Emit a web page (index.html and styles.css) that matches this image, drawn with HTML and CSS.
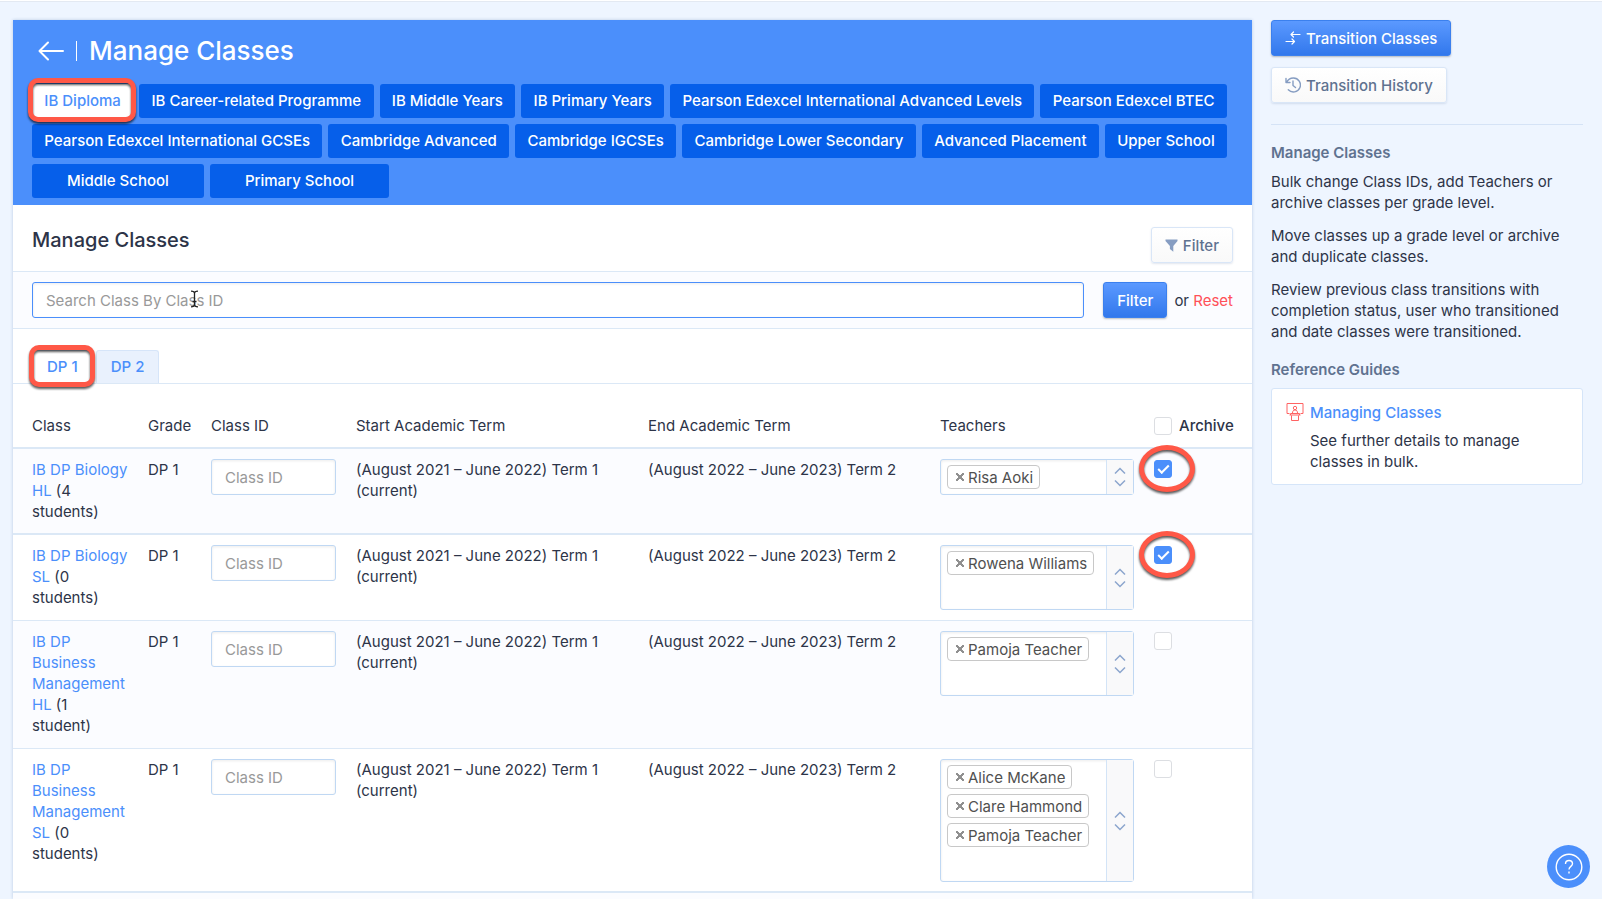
FILE: index.html
```html
<!DOCTYPE html>
<html lang="en">
<head>
  <meta charset="UTF-8">
  <meta name="viewport" content="width=device-width, initial-scale=1.0">
  <title>Manage Classes</title>
  <link rel="stylesheet" href="styles.css">
</head>
<body>
  <div class="layout">
    <main class="panel">
      <header class="panel-header">
        <div class="title-row">
          <a href="#" class="back" aria-label="Back">
            <svg width="26" height="20" viewBox="0 0 26 20" fill="none" stroke="#fff" stroke-width="2" stroke-linecap="round" stroke-linejoin="round"><path d="M10 1.500 1.500 10l8.500 8.500M2 10h23"/></svg>
          </a>
          <h1>Manage Classes</h1>
        </div>
        <nav class="programmes">
          <a href="#" class="programme active marked">IB Diploma</a>
          <a href="#" class="programme">IB Career-related Programme</a>
          <a href="#" class="programme">IB Middle Years</a>
          <a href="#" class="programme">IB Primary Years</a>
          <a href="#" class="programme">Pearson Edexcel International Advanced Levels</a>
          <a href="#" class="programme">Pearson Edexcel BTEC</a>
          <a href="#" class="programme">Pearson Edexcel International GCSEs</a>
          <a href="#" class="programme">Cambridge Advanced</a>
          <a href="#" class="programme">Cambridge IGCSEs</a>
          <a href="#" class="programme">Cambridge Lower Secondary</a>
          <a href="#" class="programme">Advanced Placement</a>
          <a href="#" class="programme">Upper School</a>
          <a href="#" class="programme wide">Middle School</a>
          <a href="#" class="programme wide">Primary School</a>
        </nav>
      </header>

      <div class="section-head">
        <h2>Manage Classes</h2>
        <button type="button" class="btn">
          <svg width="13" height="13" viewBox="0 0 13 13" fill="#869dc2"><path d="M0.500 0.500h12v1.500L8.300 7v5.800L4.900 10V7L0.500 2z"/></svg>
          Filter
        </button>
      </div>

      <form class="search">
        <div class="search-field">
          <input type="text" class="field" placeholder="Search Class By Class ID" aria-label="Search Class By Class ID">
          <svg class="cursor" width="9" height="18" viewBox="0 0 9 18" fill="none" stroke="#222" stroke-width="1.300"><path d="M1 1.200c2 0 3.500.5 3.500 2v11.600c0 1.500-1.500 2-3.500 2M8 1.200c-2 0-3.500.5-3.500 2M8 16.800c-2 0-3.500-.5-3.500-2M2.500 11.500h4"/></svg>
        </div>
        <button type="button" class="btn btn-primary">Filter</button>
        <span class="reset">or <a href="#">Reset</a></span>
      </form>

      <nav class="grades">
        <a href="#" class="grade active marked">DP 1</a>
        <a href="#" class="grade">DP 2</a>
      </nav>

      <table class="classes">
        <colgroup>
          <col class="col-class">
          <col class="col-grade">
          <col class="col-id">
          <col>
          <col>
          <col class="col-teachers">
          <col class="col-archive">
        </colgroup>
        <thead>
          <tr>
            <th>Class</th>
            <th>Grade</th>
            <th>Class ID</th>
            <th>Start Academic Term</th>
            <th>End Academic Term</th>
            <th>Teachers</th>
            <th><label class="archive-all"><input type="checkbox" class="check"> Archive</label></th>
          </tr>
        </thead>
        <tbody>
          <tr class="strong">
            <td><a href="#">IB DP Biology HL</a> (4 students)</td>
            <td>DP 1</td>
            <td><input type="text" class="field" placeholder="Class ID" aria-label="Class ID"></td>
            <td>(August 2021 – June 2022) Term 1 (current)</td>
            <td>(August 2022 – June 2023) Term 2</td>
            <td class="control">
              <div class="teachers">
                <div class="chips">
                  <span class="chip"><button type="button" aria-label="Remove"></button>Risa Aoki</span>
                  <input type="text" aria-label="Add teacher">
                </div>
                <button type="button" class="toggle" aria-label="Open list"><svg width="12" height="20" viewBox="0 0 12 20"><path d="M1 6.500l5-5 5 5M1 13.500l5 5 5-5"/></svg></button>
              </div>
            </td>
            <td><span class="circled"><input type="checkbox" class="check" aria-label="Archive" checked></span></td>
          </tr>
          <tr>
            <td><a href="#">IB DP Biology SL</a> (0 students)</td>
            <td>DP 1</td>
            <td><input type="text" class="field" placeholder="Class ID" aria-label="Class ID"></td>
            <td>(August 2021 – June 2022) Term 1 (current)</td>
            <td>(August 2022 – June 2023) Term 2</td>
            <td class="control">
              <div class="teachers">
                <div class="chips">
                  <span class="chip"><button type="button" aria-label="Remove"></button>Rowena Williams</span>
                  <input type="text" aria-label="Add teacher">
                </div>
                <button type="button" class="toggle" aria-label="Open list"><svg width="12" height="20" viewBox="0 0 12 20"><path d="M1 6.500l5-5 5 5M1 13.500l5 5 5-5"/></svg></button>
              </div>
            </td>
            <td><span class="circled"><input type="checkbox" class="check" aria-label="Archive" checked></span></td>
          </tr>
          <tr>
            <td><a href="#">IB DP Business Management HL</a> (1 student)</td>
            <td>DP 1</td>
            <td><input type="text" class="field" placeholder="Class ID" aria-label="Class ID"></td>
            <td>(August 2021 – June 2022) Term 1 (current)</td>
            <td>(August 2022 – June 2023) Term 2</td>
            <td class="control">
              <div class="teachers">
                <div class="chips">
                  <span class="chip"><button type="button" aria-label="Remove"></button>Pamoja Teacher</span>
                  <input type="text" aria-label="Add teacher">
                </div>
                <button type="button" class="toggle" aria-label="Open list"><svg width="12" height="20" viewBox="0 0 12 20"><path d="M1 6.500l5-5 5 5M1 13.500l5 5 5-5"/></svg></button>
              </div>
            </td>
            <td><input type="checkbox" class="check" aria-label="Archive"></td>
          </tr>
          <tr class="strong">
            <td><a href="#">IB DP Business Management SL</a> (0 students)</td>
            <td>DP 1</td>
            <td><input type="text" class="field" placeholder="Class ID" aria-label="Class ID"></td>
            <td>(August 2021 – June 2022) Term 1 (current)</td>
            <td>(August 2022 – June 2023) Term 2</td>
            <td class="control">
              <div class="teachers">
                <div class="chips">
                  <span class="chip"><button type="button" aria-label="Remove"></button>Alice McKane</span>
                  <span class="chip"><button type="button" aria-label="Remove"></button>Clare Hammond</span>
                  <span class="chip"><button type="button" aria-label="Remove"></button>Pamoja Teacher</span>
                  <input type="text" aria-label="Add teacher">
                </div>
                <button type="button" class="toggle" aria-label="Open list"><svg width="12" height="20" viewBox="0 0 12 20"><path d="M1 6.500l5-5 5 5M1 13.500l5 5 5-5"/></svg></button>
              </div>
            </td>
            <td><input type="checkbox" class="check" aria-label="Archive"></td>
          </tr>
        </tbody>
      </table>
    </main>

    <aside class="sidebar">
      <div class="actions">
        <button type="button" class="btn btn-primary">
          <svg width="16" height="14" viewBox="0 0 16 14" fill="none" stroke="#fff" stroke-width="1.200" stroke-linecap="round" stroke-linejoin="round"><path d="M15 3.500H6M8.500 1 6 3.500 8.500 6M1 10.500h8.500M7 8l2.500 2.500L7 13"/></svg>
          Transition Classes
        </button>
        <button type="button" class="btn">
          <svg width="16" height="16" viewBox="0 0 16 16" fill="none" stroke="#869dc2" stroke-width="1.400" stroke-linecap="round" stroke-linejoin="round"><path d="M1 1.500v4h4M1.500 5.500C3 2.500 5.500 1 8.300 1a7 7 0 1 1-5 11.800M8 4v4.500l2.500 2"/></svg>
          Transition History
        </button>
      </div>
      <h3>Manage Classes</h3>
      <p>Bulk change Class IDs, add Teachers or archive classes per grade level.</p>
      <p>Move classes up a grade level or archive and duplicate classes.</p>
      <p>Review previous class transitions with completion status, user who transitioned and date classes were transitioned.</p>
      <h3 class="guides">Reference Guides</h3>
      <div class="guide">
        <svg width="18" height="20" viewBox="0 0 18 20" fill="none" stroke="#ff6363" stroke-width="1"><path d="M3.500 11.500h-2.500V1.500h16v10h-2.500M4.500 13v-1.500h9V13M3.500 13h11M5.500 13.500v5h7v-5M6.500 11c0-2 1-3 2.500-3s2.500 1 2.500 3"/><circle cx="9" cy="6" r="1.700"/></svg>
        <div>
          <a href="#">Managing Classes</a>
          <p>See further details to manage classes in bulk.</p>
        </div>
      </div>
    </aside>
  </div>

  <button type="button" class="help" aria-label="Help">
    <svg width="28" height="28" viewBox="0 0 28 28" fill="none" stroke="#fff" stroke-width="1.400"><circle cx="14" cy="14" r="12.800"/><path d="M10.500 11c0-2.300 1.500-3.500 3.500-3.500s3.500 1.300 3.500 3.200c0 2.600-3.500 2.800-3.500 5.800M14 18.500v2"/></svg>
  </button>
</body>
</html>
```
FILE: styles.css
```css
*, *::before, *::after {
  box-sizing: border-box;
}
body {
  margin: 0;
  font-family: Inter, "Liberation Sans", sans-serif;
  font-size: 15px;
  line-height: 21px;
  color: #2d3448;
  background-color: #eef5ff;
  border-top: 1px solid #fff;
}
h1, h2, h3, p {
  margin: 0;
}
a {
  color: #4b8ffb;
  text-decoration: none;
}
button, input {
  font: inherit;
}
.layout {
  display: grid;
  grid-template-columns: minmax(0, 1fr) 312px;
  gap: 19px;
  min-height: calc(100vh - 1px);
  padding: 18px 19px 0 13px;
  border-top: 1px solid #e3e9f2;
}

/* main panel */
.panel {
  background-color: #fbfcff;
  box-shadow: 0 0 3px rgba(60, 100, 160, 0.3);
}
.panel-header {
  padding: 14px 25px 7px 19px;
  background-color: #4b8ffb;
}
.title-row {
  display: flex;
  align-items: center;
  padding-left: 6px;
}
.back {
  display: flex;
  padding-right: 12px;
  border-right: 1px solid #fff;
}
h1 {
  padding-left: 12px;
  font-size: 26px;
  line-height: 34px;
  font-weight: 500;
  color: #fff;
}
.programmes {
  display: flex;
  flex-wrap: wrap;
  gap: 6px;
  margin-top: 16px;
}
.programme {
  flex: 1 0 auto;
  height: 34px;
  padding: 0 12px;
  border-radius: 3px;
  background-color: #065fea;
  color: #fff;
  font-weight: 500;
  line-height: 34px;
  text-align: center;
}
.programme.active {
  background-color: #fff;
  color: #4b8ffb;
}
.programme.wide {
  flex-grow: 0;
  padding: 0 35px;
}
.marked {
  position: relative;
}
.marked::after {
  content: "";
  position: absolute;
  inset: -6px -3px -4px -4px;
  border: 5px solid #ff5847;
  border-radius: 10px;
  filter: drop-shadow(0 2px 1px rgba(0, 0, 0, 0.65));
}
.section-head {
  display: flex;
  justify-content: space-between;
  align-items: flex-start;
  padding: 22px 19px 8px;
  background-color: #fff;
  border-bottom: 1px solid #dbe8f6;
}
h2 {
  font-size: 20px;
  line-height: 26px;
  font-weight: 500;
}
.btn {
  display: inline-flex;
  align-items: center;
  gap: 5px;
  height: 36px;
  padding: 0 13px;
  border: 1px solid #d9e6f7;
  border-radius: 3px;
  background: linear-gradient(#fff, #f9f9f9);
  box-shadow: 0 1px 2px rgba(60, 90, 140, 0.15);
  color: #5f7290;
  font-weight: 500;
}
.btn-primary {
  border-color: #3b80ee;
  background: linear-gradient(#5b99ff, #3278ec);
  box-shadow: 0 1px 2px rgba(0, 0, 0, 0.25);
  color: #fff;
}
.search {
  display: flex;
  align-items: center;
  padding: 10px 19px;
  border-bottom: 1px solid #dbe8f6;
}
.search-field {
  position: relative;
  flex: 1;
  margin-right: 19px;
}
.field {
  display: block;
  width: 100%;
  height: 36px;
  padding: 0 13px;
  border: 1px solid #c0d8f3;
  border-radius: 3px;
  background-color: #fff;
  box-shadow: inset 0 1px 3px rgba(0, 0, 0, 0.08);
  color: #2d3448;
}
.field::placeholder {
  color: #999;
}
.search .field {
  border-color: #4b8ffb;
}
.cursor {
  position: absolute;
  top: 8px;
  left: 158px;
}
.reset {
  margin-left: 7px;
}
.reset a {
  color: #ff5058;
}
.grades {
  display: flex;
  gap: 3px;
  padding: 21px 19px 0;
  background-color: #fff;
  border-bottom: 1px solid #dbe8f6;
}
.grade {
  height: 33px;
  padding: 0 14px;
  border: 1px solid #d6e5f9;
  border-bottom: 0;
  border-radius: 3px 3px 0 0;
  background-color: #e9f1fd;
  font-weight: 500;
  line-height: 31px;
}
.grade.active {
  background-color: #fff;
}

/* classes table */
.classes {
  width: 100%;
  table-layout: fixed;
  border-spacing: 0;
}
.col-class {
  width: 125px;
}
.col-grade {
  width: 63px;
}
.col-id {
  width: 145px;
}
.col-teachers {
  width: 214px;
}
.col-archive {
  width: 108px;
}
th, td {
  padding: 10px 10px 12px;
  border-bottom: 1px solid #dbe8f6;
  text-align: left;
  vertical-align: top;
}
th {
  padding: 31px 10px 11px;
  border-bottom-width: 2px;
  background-color: #fff;
  font-weight: 400;
  white-space: nowrap;
}
th:first-child, td:first-child {
  padding-left: 19px;
}
tr.strong td {
  padding-bottom: 11px;
  border-bottom-width: 2px;
}
tr td.control {
  padding-bottom: 9px;
}
tbody tr:nth-child(even) {
  background-color: #fff;
}
.archive-all {
  display: flex;
  align-items: center;
  gap: 7px;
  font-weight: 500;
}
.check {
  appearance: none;
  display: block;
  width: 18px;
  height: 18px;
  margin: 1px 0;
  border: 1px solid #dcdee2;
  border-radius: 3px;
  background-color: #fff;
}
.check:checked {
  border-color: #4b8ffb;
  background-color: #4b8ffb;
}
.check:checked::after {
  content: "";
  display: block;
  width: 11px;
  height: 6px;
  margin: 4px 3px;
  border: solid #fff;
  border-width: 0 0 2px 2px;
  transform: rotate(-45deg);
}
.circled {
  position: relative;
  display: block;
  width: 18px;
}
.circled::after {
  content: "";
  position: absolute;
  top: -15px;
  left: -15px;
  width: 56px;
  height: 47px;
  border: 5px solid #ff5847;
  border-radius: 50%;
  filter: drop-shadow(0 2px 1px rgba(0, 0, 0, 0.65));
  pointer-events: none;
}
.teachers {
  display: flex;
  border: 1px solid #c0d8f3;
  border-radius: 3px;
  background-color: #fff;
  box-shadow: inset 0 1px 3px rgba(0, 0, 0, 0.08);
}
.chips {
  display: flex;
  flex: 1;
  flex-wrap: wrap;
  gap: 5px;
  padding: 5px 6px;
}
.chips input {
  width: 30px;
  height: 24px;
  padding: 0;
  border: 0;
  background: none;
}
.chip {
  display: flex;
  align-items: center;
  height: 24px;
  padding: 0 6px 0 8px;
  border: 1px solid #c8c8c8;
  border-radius: 4px;
  background-color: #fff;
  color: #505050;
  white-space: nowrap;
}
.chip button {
  width: 8px;
  height: 8px;
  margin-right: 4px;
  padding: 0;
  border: 0;
  background:
    linear-gradient(45deg, transparent 38%, #909090 38% 62%, transparent 62%),
    linear-gradient(-45deg, transparent 38%, #909090 38% 62%, transparent 62%);
}
.toggle {
  width: 27px;
  padding: 0;
  border: 0;
  border-left: 1px solid #d3e4f7;
  background-color: #f9f9fa;
}
.toggle svg {
  display: block;
  margin: 0 auto;
  fill: none;
  stroke: #8ba5cd;
  stroke-width: 1.5;
}

/* sidebar */
.actions {
  display: flex;
  flex-direction: column;
  align-items: flex-start;
  gap: 11px;
  padding-bottom: 21px;
  margin-bottom: 17px;
  border-bottom: 1px solid #d5e3f6;
}
h3 {
  margin-bottom: 8px;
  font-size: 15px;
  font-weight: 600;
  color: #5f7290;
}
.sidebar p {
  margin-bottom: 12px;
}
.sidebar .guides {
  margin-top: 17px;
}
.guide {
  display: flex;
  align-items: flex-start;
  gap: 6px;
  padding: 13px 14px 12px;
  border: 1px solid #d5e5f9;
  border-radius: 3px;
  background-color: #fff;
}
.guide svg {
  flex: none;
}
.guide a {
  font-weight: 500;
}
.sidebar .guide p {
  margin: 7px 0 0;
}

.help {
  position: fixed;
  right: 12px;
  bottom: 11px;
  display: flex;
  align-items: center;
  justify-content: center;
  width: 43px;
  height: 43px;
  padding: 0;
  border: 0;
  border-radius: 50%;
  background-color: #4b8ffb;
}
```
